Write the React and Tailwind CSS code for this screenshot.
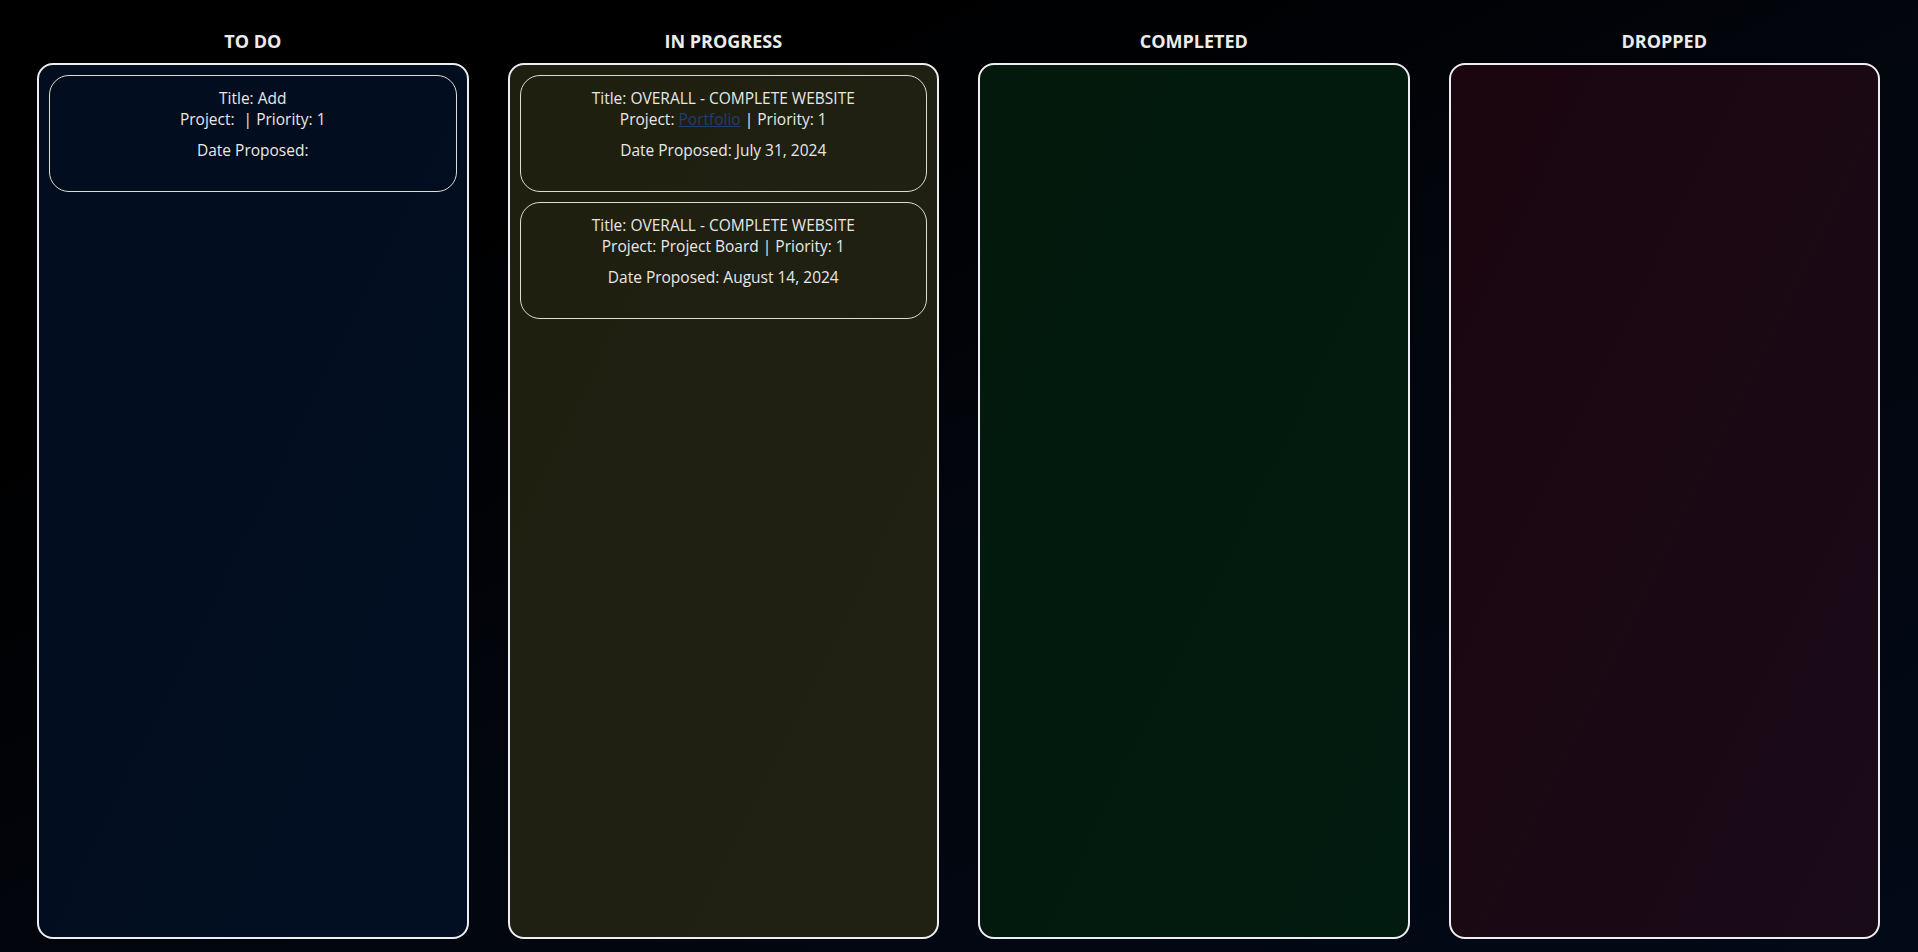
import React from 'react';

const columns = [
  {
    name: 'TO DO',
    panel: 'bg-gradient-to-br from-[#020d1e] to-[#020e22]',
    tasks: [{ title: 'Add', project: '', priority: 1, date: '' }],
  },
  {
    name: 'IN PROGRESS',
    panel: 'bg-gradient-to-br from-[#1e1f0f] to-[#202113]',
    tasks: [
      { title: 'OVERALL - COMPLETE WEBSITE', project: 'Portfolio', link: true, priority: 1, date: 'July 31, 2024' },
      { title: 'OVERALL - COMPLETE WEBSITE', project: 'Project Board', priority: 1, date: 'August 14, 2024' },
    ],
  },
  {
    name: 'COMPLETED',
    panel: 'bg-gradient-to-br from-[#02190c] to-[#021b10]',
    tasks: [],
  },
  {
    name: 'DROPPED',
    panel: 'bg-gradient-to-br from-[#1b060f] to-[#1a0b18]',
    tasks: [],
  },
];

const TaskCard = ({ task }) => (
  <div className="border border-[#dcdcd4] rounded-[20px] pt-[12px] pb-[30px] text-center text-[15.5px] leading-[21px] text-[#e8e8e8]">
    <p>Title: {task.title}</p>
    <p>
      Project:{' '}
      {task.link ? (
        <a href="#" className="text-[#1f3d73] underline">{task.project}</a>
      ) : task.project ? (
        task.project
      ) : (
        <span className="inline-block w-[1px]" />
      )}{' '}
      | Priority: {task.priority}
    </p>
    <p className="mt-[10px]">Date Proposed: {task.date}</p>
  </div>
);

export default function App() {
  return (
    <div
      className="min-h-screen h-[952px] bg-gradient-to-br from-[#000000] via-[#02050c] to-[#020a17] text-[#e8e8e8]"
      style={{ fontFamily: '"Open Sans", "Noto Sans", sans-serif' }}
    >
      <div className="grid grid-cols-4 gap-[39px] pl-[37px] pr-[38px] pt-[29px]">
        {columns.map((col) => (
          <div key={col.name} className="flex flex-col">
            <h3 className="text-center font-bold text-[18px] leading-[25px] mb-[9px] text-[#ececec]">
              {col.name}
            </h3>
            <div className={`h-[876px] border-2 border-[#eeeef2] rounded-[16px] p-[10px] flex flex-col gap-[10px] ${col.panel}`}>
              {col.tasks.map((t, i) => (
                <TaskCard key={i} task={t} />
              ))}
            </div>
          </div>
        ))}
      </div>
    </div>
  );
}
